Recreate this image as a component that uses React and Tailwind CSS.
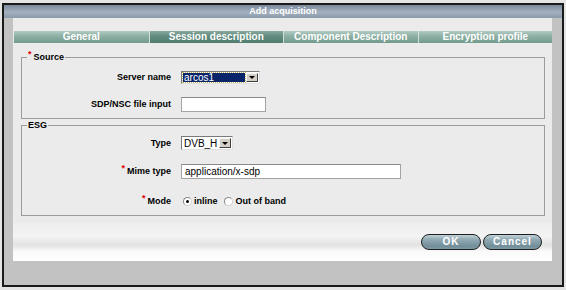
function Star() {
  return <span className="text-[#e00000] text-[9px] leading-none relative -top-[3px] mr-[2px]">*</span>
}

function Select({ value, className, focused }) {
  return (
    <div className={`flex bg-white border border-t-[#7a7a7a] border-l-[#7a7a7a] border-r-[#e0e0e0] border-b-[#e0e0e0] ${className}`}>
      <div className="flex-1 p-[1px] flex">
        <div
          className={`flex-1 flex items-center pl-[1px] text-[10px] leading-[9px] whitespace-nowrap ${
            focused ? 'bg-[#0a246a] text-white outline-1 outline-dotted outline-[#c8b860]' : 'text-black'
          }`}
        >
          {value}
        </div>
      </div>
      <div className="w-[12px] my-[1px] mr-[1px] bg-[#d4d0c8] border border-t-[#f4f4f4] border-l-[#f4f4f4] border-r-[#404040] border-b-[#404040] flex items-center justify-center">
        <div className="w-0 h-0 border-l-[3px] border-r-[3px] border-t-[3px] border-l-transparent border-r-transparent border-t-black" />
      </div>
    </div>
  )
}

function TextInput({ value, className }) {
  return (
    <div className={`bg-white border border-[#a4a4a4] border-t-[#8a8a8a] flex items-center pl-[3px] text-[10px] leading-none text-black ${className}`}>
      {value}
    </div>
  )
}

function Radio({ checked }) {
  return (
    <div className="w-[9px] h-[9px] rounded-full bg-white border border-[#8a8a8a] border-b-[#d0d0d0] border-r-[#d0d0d0] flex items-center justify-center">
      {checked && <div className="w-[3px] h-[3px] rounded-full bg-black" />}
    </div>
  )
}

function Row({ label, required, className, children }) {
  return (
    <div className={`flex items-center gap-[10px] ${className}`}>
      <div className="w-[149px] text-right text-[9px] font-bold leading-none text-black">
        {required && <Star />}
        {label}
      </div>
      {children}
    </div>
  )
}

const tabs = ['General', 'Session description', 'Component Description', 'Encryption profile']

export default function App() {
  return (
    <div className="w-[566px] h-[290px] bg-[#e4e4e4] overflow-hidden pt-[3px] pl-[2px] font-['Liberation_Sans',Arial,sans-serif]">
      <div className="w-[562px] h-[284px] border-2 border-[#1a1a1a] bg-[#c2c2c2] flex flex-col">
        <div className="h-[13px] bg-[linear-gradient(to_bottom,#7a8b9d,#a3b0be_55%,#8a9aab)] text-white text-[9px] font-bold leading-[13px] text-center">
          Add acquisition
        </div>

        <div className="flex pl-[9px]">
          <div className="w-[539px] h-[243px] bg-[#ebebeb] flex flex-col">
            <div className="mt-[13px] ml-[1px] w-[538px] h-[12px] grid grid-cols-4">
              {tabs.map((t, i) => (
                <div
                  key={t}
                  className={`text-white text-[10px] font-bold leading-[12px] text-center ${i > 0 ? 'border-l border-[#d2ded9]' : ''} ${
                    i === 1
                      ? 'bg-[linear-gradient(to_bottom,#8aa89e,#628d80_40%,#517d70)]'
                      : 'bg-[linear-gradient(to_bottom,#b3cbc3,#8fb1a6_40%,#729a8d)]'
                  }`}
                >
                  {t}
                </div>
              ))}
            </div>

            <fieldset className="mt-[8px] ml-[8px] w-[524px] border border-[#9c9c9c]">
              <legend className="ml-[5px] px-[1px] text-[9px] font-bold leading-[12px] text-black">
                <Star />Source
              </legend>
              <div className="pt-[8px] pb-[6px] flex flex-col gap-[13px]">
                <Row label="Server name" className="h-[13px]">
                  <Select value="arcos1" focused className="w-[79px] h-[13px]" />
                </Row>
                <Row label="SDP/NSC file input" className="h-[15px]">
                  <TextInput value="" className="w-[85px] h-[15px]" />
                </Row>
              </div>
            </fieldset>

            <fieldset className="ml-[8px] w-[524px] border border-[#9c9c9c]">
              <legend className="ml-[5px] px-[1px] text-[9px] font-bold leading-[12px] text-black">ESG</legend>
              <div className="pt-[5px] pb-[7px] flex flex-col">
                <Row label="Type" className="h-[14px]">
                  <Select value="DVB_H" className="w-[52px] h-[14px]" />
                </Row>
                <Row label="Mime type" required className="h-[15px] mt-[14px]">
                  <TextInput value="application/x-sdp" className="w-[220px] h-[15px]" />
                </Row>
                <Row label="Mode" required className="h-[13px] mt-[16px]">
                  <div className="flex items-center ml-[2px] text-[9px] font-bold leading-none text-black">
                    <Radio checked />
                    <span className="ml-[2px]">inline</span>
                    <span className="ml-[6px]"><Radio /></span>
                    <span className="ml-[3px]">Out of band</span>
                  </div>
                </Row>
              </div>
            </fieldset>

            <div className="mt-[7px] h-[38px] bg-[linear-gradient(to_bottom,#eeeeee_0%,#f3f3f3_35%,#e2e2e2_58%,#fafafa_75%,#ffffff_100%)] flex justify-end items-start pt-[11px] pr-[10px] gap-[2px]">
              {['OK', 'Cancel'].map((b) => (
                <button
                  key={b}
                  className={`h-[16px] rounded-full border-[1.5px] border-[#1e1e1e] bg-[linear-gradient(to_bottom,#c3d2d8,#93abb4_30%,#718e99_80%,#7f99a3)] text-white text-[10px] font-bold leading-none tracking-[1px] ${
                    b === 'OK' ? 'w-[60px]' : 'w-[59px]'
                  }`}
                >
                  {b}
                </button>
              ))}
            </div>
          </div>
        </div>
      </div>
    </div>
  )
}
